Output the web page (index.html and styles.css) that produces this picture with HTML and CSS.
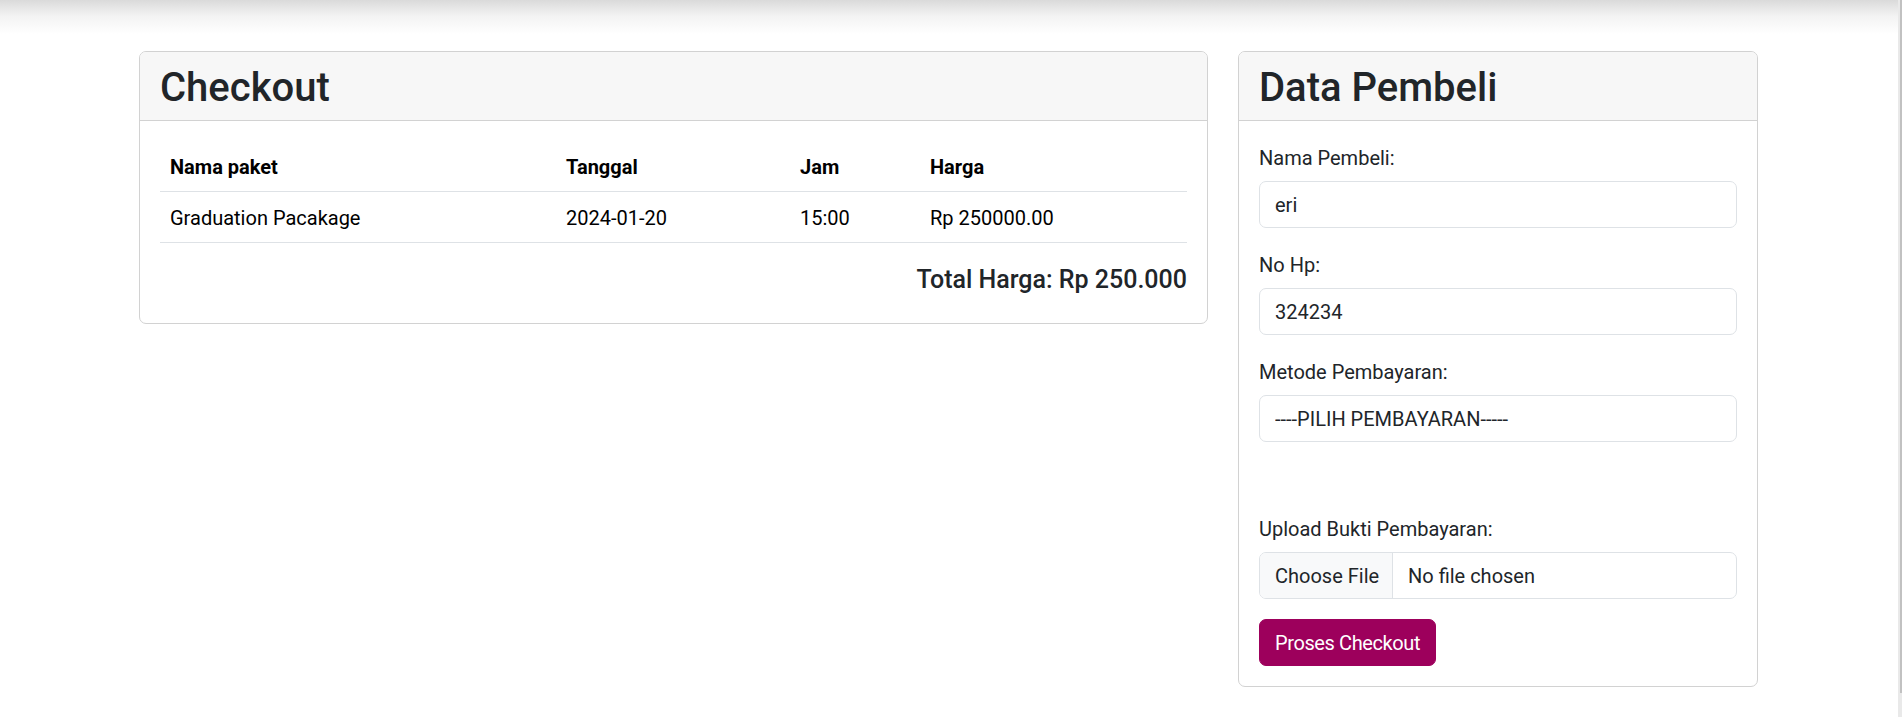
FILE: index.html
```html
<!DOCTYPE html>
<html lang="id">
<head>
<meta charset="utf-8">
<title>Checkout</title>
<link rel="stylesheet" href="styles.css">
</head>
<body>
<div class="page">
  <div class="layout">
    <section class="card card-checkout">
      <div class="card-header"><h2 class="card-title">Checkout</h2></div>
      <div class="card-body">
        <table class="table">
          <thead>
            <tr>
              <th class="col-name">Nama paket</th>
              <th class="col-date">Tanggal</th>
              <th class="col-time">Jam</th>
              <th class="col-price">Harga</th>
            </tr>
          </thead>
          <tbody>
            <tr>
              <td>Graduation Pacakage</td>
              <td>2024-01-20</td>
              <td>15:00</td>
              <td>Rp 250000.00</td>
            </tr>
          </tbody>
        </table>
        <h5 class="total">Total Harga: Rp 250.000</h5>
      </div>
    </section>

    <section class="card card-buyer">
      <div class="card-header"><h2 class="card-title">Data Pembeli</h2></div>
      <form class="card-body">
        <div class="field">
          <label class="form-label" for="nama">Nama Pembeli:</label>
          <input class="form-control" id="nama" type="text" value="eri">
        </div>
        <div class="field">
          <label class="form-label" for="hp">No Hp:</label>
          <input class="form-control" id="hp" type="text" value="324234">
        </div>
        <div class="field">
          <label class="form-label" for="metode">Metode Pembayaran:</label>
          <select class="form-control form-select" id="metode">
            <option>----PILIH PEMBAYARAN-----</option>
          </select>
        </div>
        <div class="field field-empty"></div>
        <div class="field">
          <label class="form-label" for="bukti">Upload Bukti Pembayaran:</label>
          <div class="form-control file-input">
            <span class="file-button">Choose File</span>
            <span class="file-name">No file chosen</span>
          </div>
        </div>
        <button class="btn-checkout" type="button">Proses Checkout</button>
      </form>
    </section>
  </div>
</div>
<div class="scrollbar"></div>
</body>
</html>
```

FILE: styles.css
```css
html, body {
  margin: 0;
  padding: 0;
}

body {
  display: flex;
  min-height: 717px;
  font-family: Roboto, "Liberation Sans", sans-serif;
  font-size: 20px;
  line-height: 30px;
  color: #212529;
  background: linear-gradient(to bottom, #dadada 0px, #f3f3f3 16px, #ffffff 34px) no-repeat;
  background-size: 1898px 40px;
}

.page {
  flex: 1;
}

.scrollbar {
  width: 4px;
  flex: none;
  background:
    linear-gradient(to bottom, #c1c1c1 693px, #e9e9e9 693px) right top / 2px 100% no-repeat,
    #e9e9e9;
}

.layout {
  display: grid;
  grid-template-columns: 1069px 520px;
  column-gap: 30px;
  align-items: start;
  padding: 51px 0 0 139px;
}

.card {
  border: 1px solid #d2d2d2;
  border-radius: 7px;
  background: #fff;
  overflow: hidden;
}

.card-header {
  background: #f7f7f7;
  border-bottom: 1px solid #d2d2d2;
  padding: 12px 20px 8px;
  height: 48px;
}

.card-title {
  margin: 0;
  font-size: 40px;
  line-height: 48px;
  font-weight: 500;
  color: #212529;
}

.card-body {
  display: block;
  padding: 20px;
  margin: 0;
}

.table {
  width: 100%;
  border-collapse: collapse;
  table-layout: fixed;
  margin-bottom: 20px;
  color: #000;
}

.table th,
.table td {
  text-align: left;
  padding: 11px 10px 9px;
  line-height: 30px;
  border-bottom: 1px solid #dee2e6;
}

.table th {
  font-weight: 700;
}

.col-name { width: 376px; }
.col-date { width: 214px; }
.col-time { width: 110px; }

.total {
  margin: 0 0 10px;
  padding-top: 2px;
  height: 28px;
  text-align: right;
  font-size: 25px;
  line-height: 30px;
  font-weight: 500;
  color: #212529;
}

.field {
  margin-bottom: 20px;
}

.field-empty {
  height: 30px;
}

.form-label {
  display: block;
  margin-bottom: 10px;
  padding-top: 2px;
  height: 28px;
}

.form-control {
  display: block;
  box-sizing: border-box;
  width: 100%;
  height: 47px;
  margin: 0;
  padding: 8px 15px 7px;
  font-family: inherit;
  font-size: 20px;
  line-height: 30px;
  color: #212529;
  background: #fff;
  border: 1px solid #dee2e6;
  border-radius: 7px;
  outline: none;
}

.form-select {
  appearance: none;
  -webkit-appearance: none;
}

.file-input {
  display: flex;
  align-items: stretch;
  padding: 0;
  overflow: hidden;
}

.file-button {
  box-sizing: border-box;
  width: 133px;
  padding: 8px 15px 7px;
  background: #f8f9fa;
  border-right: 1px solid #dee2e6;
  white-space: nowrap;
}

.file-name {
  padding: 8px 15px 7px;
  white-space: nowrap;
}

.btn-checkout {
  display: inline-block;
  height: 47px;
  padding: 8px 15px 7px;
  font-family: inherit;
  font-size: 20px;
  line-height: 30px;
  letter-spacing: -0.4px;
  color: #fff;
  background: #9d005c;
  border: 1px solid #9d005c;
  border-radius: 7px;
  cursor: pointer;
}
```
